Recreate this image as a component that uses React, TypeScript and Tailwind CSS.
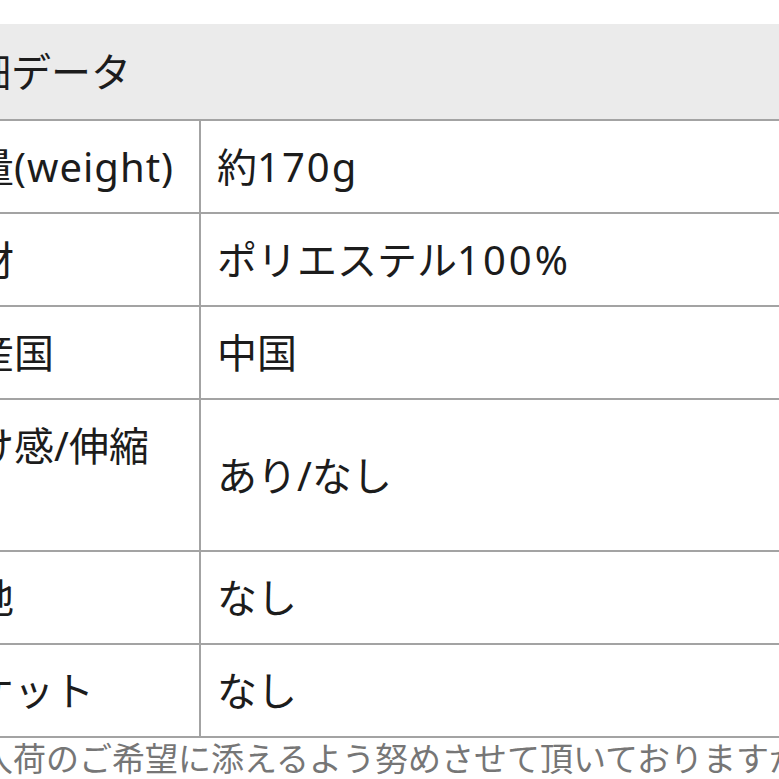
import React from "react";

const N = ({ children }: { children: React.ReactNode }) => (
  <span className="tracking-[3px]">{children}</span>
);
const L = ({ children }: { children: React.ReactNode }) => (
  <span className="tracking-[1px]">{children}</span>
);

const rows: { label: React.ReactNode; value: React.ReactNode }[] = [
  {
    label: (
      <>
        重量<L>(weight)</L>
      </>
    ),
    value: (
      <>
        約<span className="tracking-[2px]">170</span>g
      </>
    ),
  },
  {
    label: "素材",
    value: (
      <>
        ポリエステル<N>100%</N>
      </>
    ),
  },
  { label: "生産国", value: "中国" },
  {
    label: (
      <>
        透け感/伸縮
        <br />
        性
      </>
    ),
    value: "あり/なし",
  },
  { label: "裏地", value: "なし" },
  { label: "ポケット", value: "なし" },
];

export default function App() {
  return (
    <div
      className="w-[779px] h-[779px] overflow-hidden bg-white pt-[24px] text-[#1c1c1c]"
      style={{ fontFamily: '"Noto Sans", "Noto Sans CJK JP", sans-serif' }}
    >
      <div className="-ml-[80px] w-[900px]">
        <div className="bg-[#ebebeb] border-b-2 border-[#a3a3a3] py-[18px] pl-[11px] text-[40px] leading-[59px] whitespace-nowrap">
          詳細データ
        </div>
        {rows.map((r, i) => (
          <div
            key={i}
            className="grid grid-cols-[281px_1fr] border-b-2 border-[#a3a3a3] text-[40px] leading-[59px]"
          >
            <div className="border-r-2 border-[#a3a3a3] py-[16px] pl-[14px] whitespace-nowrap">
              {r.label}
            </div>
            <div className="py-[16px] pl-[16px] flex items-center whitespace-nowrap">
              <span>{r.value}</span>
            </div>
          </div>
        ))}
      </div>
      <p className="-ml-[20px] whitespace-nowrap text-[33px] leading-[42px] text-[#767676]">
        入荷のご希望に添えるよう努めさせて頂いておりますが、
      </p>
    </div>
  );
}
